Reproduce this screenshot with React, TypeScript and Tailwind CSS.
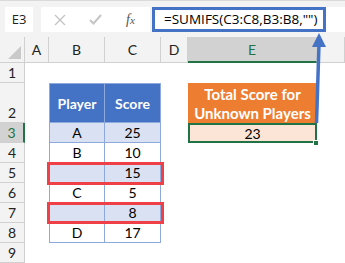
import React from "react";

const COLS = ["A", "B", "C", "D", "E", "F"];
const ROWS = [1, 2, 3, 4, 5, 6, 7, 8, 9];

const tableData: Record<number, [string, string]> = {
  3: ["A", "25"],
  4: ["B", "10"],
  5: ["", "15"],
  6: ["C", "5"],
  7: ["", "8"],
  8: ["D", "17"],
};

function Cell({ r, c }: { r: number; c: string }) {
  const base = "flex items-center justify-center min-w-0";
  if (r === 2 && (c === "B" || c === "C")) {
    return (
      <div
        className={`${base} bg-[#4472C4] text-white font-bold text-[14px] border-t border-b border-r border-[#8EA9DB] ${
          c === "B" ? "border-l" : ""
        }`}
      >
        {c === "B" ? "Player" : "Score"}
      </div>
    );
  }
  if (r >= 3 && r <= 8 && (c === "B" || c === "C")) {
    const band = r % 2 === 1 ? "bg-[#D9E1F2]" : "bg-white";
    const val = tableData[r][c === "B" ? 0 : 1];
    return (
      <div
        className={`${base} ${band} text-[14px] text-black border-b border-r border-[#8EA9DB] ${
          c === "B" ? "border-l" : ""
        }`}
      >
        {val}
      </div>
    );
  }
  if (r === 2 && c === "E") {
    return (
      <div className="flex flex-col items-center justify-center bg-[#ED7D31] text-white font-bold text-[15px] leading-[19px] pt-[1px] whitespace-nowrap">
        <span>Total Score for</span>
        <span>Unknown Players</span>
      </div>
    );
  }
  if (r === 3 && c === "E") {
    return (
      <div className={`${base} bg-[#FCE4D6] border-2 border-[#217346] text-[14px] text-black`}>
        23
      </div>
    );
  }
  return <div className="bg-white" />;
}

export default function App() {
  return (
    <div
      className="relative w-[345px] h-[263px] overflow-hidden bg-white"
      style={{ fontFamily: "Lato, 'Liberation Sans', sans-serif" }}
    >
      {/* Formula bar */}
      <div
        className="h-[37px] bg-[#f3f3f3] border-t border-[#dadada] flex items-start pt-[6px]"
        style={{ fontFamily: "'Open Sans', 'Noto Sans', sans-serif" }}
      >
        <div className="ml-[5px] w-[28px] h-[25px] bg-white flex items-center justify-center text-[13px] text-[#222]">
          E3
        </div>
        <div className="ml-[8px] w-[109px] h-[25px] bg-white flex items-center">
          <svg width="12" height="12" viewBox="0 0 12 12" className="ml-[13px]">
            <path d="M1 1 L11 11 M11 1 L1 11" stroke="#c4c4c4" strokeWidth="1.4" fill="none" />
          </svg>
          <svg width="13" height="11" viewBox="0 0 13 11" className="ml-[23px]">
            <path d="M1 6 L4.5 9.5 L12 1" stroke="#c4c4c4" strokeWidth="2" fill="none" />
          </svg>
          <span
            className="ml-[24px] text-[14px] italic text-[#555]"
            style={{ fontFamily: "'Liberation Serif', serif" }}
          >
            f<span className="text-[11px]">x</span>
          </span>
        </div>
        <div className="ml-[2px] flex-1 h-[25px] bg-white">
          <div className="w-[174px] h-[25px] border-[3px] border-[#4472C4] flex items-center pl-[9px] text-[13.5px] text-black">
            =SUMIFS(C3:C8,B3:B8,"")
          </div>
        </div>
      </div>

      {/* Grid */}
      <div className="grid grid-cols-[25px_24px_56px_56px_27px_129px_1fr] grid-rows-[26px_20px_40px_20px_20px_20px_20px_20px_20px_20px]">
        {/* corner */}
        <div className="bg-[#f3f3f3] border-r border-b border-[#d0d0d0] flex items-end justify-end p-[3px]">
          <svg width="13" height="13" viewBox="0 0 13 13">
            <polygon points="13,0 13,13 0,13" fill="#c9c9c9" />
          </svg>
        </div>
        {COLS.map((c) =>
          c === "E" ? (
            <div
              key={c}
              className="bg-[#d2d2d2] text-[#217346] border-r border-[#d0d0d0] border-b-2 border-b-[#217346] flex items-center justify-center text-[14px]"
            >
              {c}
            </div>
          ) : (
            <div
              key={c}
              className="bg-[#f3f3f3] text-[#222] border-r border-b border-[#d0d0d0] flex items-center justify-center text-[14px]"
            >
              {c === "F" ? "" : c}
            </div>
          )
        )}
        {ROWS.map((r) => (
          <React.Fragment key={r}>
            {r === 3 ? (
              <div className="bg-[#d2d2d2] text-[#217346] border-b border-[#d0d0d0] border-r-2 border-r-[#217346] flex items-end justify-center text-[14px] leading-[18px]">
                {r}
              </div>
            ) : (
              <div className="bg-[#f3f3f3] text-[#222] border-r border-b border-[#d0d0d0] flex items-end justify-center text-[14px] leading-[18px]">
                {r}
              </div>
            )}
            {COLS.map((c) => (
              <Cell key={c} r={r} c={c} />
            ))}
          </React.Fragment>
        ))}
      </div>

      {/* Red highlight boxes */}
      <div className="absolute left-[47px] top-[162px] w-[117px] h-[23px] border-[3px] border-[#EF4048]" />
      <div className="absolute left-[47px] top-[202px] w-[117px] h-[22px] border-[3px] border-[#EF4048]" />

      {/* fill handle */}
      <div className="absolute left-[313px] top-[140px] w-[6px] h-[6px] bg-[#217346] border border-white" />

      {/* Arrow */}
      <svg className="absolute left-0 top-0" width="345" height="263" viewBox="0 0 345 263">
        <line x1="316.5" y1="123" x2="319" y2="44" stroke="#4472C4" strokeWidth="3.5" />
        <polygon points="319,33 312,47 326,47" fill="#4472C4" />
      </svg>
    </div>
  );
}
